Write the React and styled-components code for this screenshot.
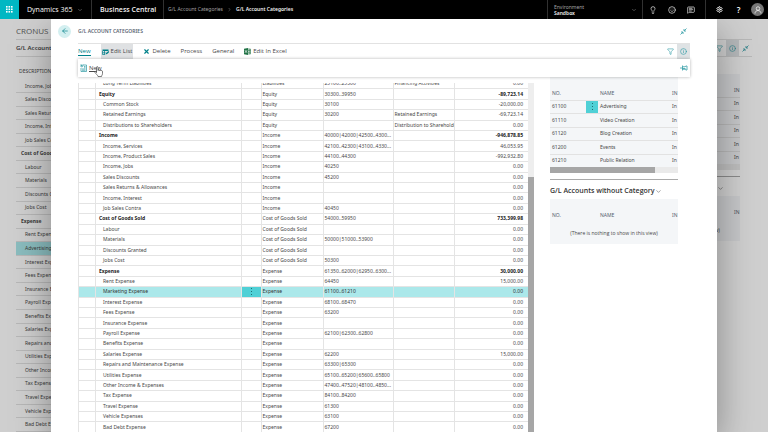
import styled, { createGlobalStyle, css } from 'styled-components'
import { ArrowLeft, ChevronDown, ChevronRight, Filter, Info, Lightbulb, MessageSquareText, Minimize2, Settings, Smile, X } from 'lucide-react'

const GlobalStyle = createGlobalStyle`
  * {
    box-sizing: border-box;
  }
  body {
    margin: 0;
    font-family: 'Noto Sans', 'Open Sans', sans-serif;
    font-size: 5px;
    line-height: 7px;
    color: #484848;
    background: #fff;
  }
  button {
    font: inherit;
    color: inherit;
    background: none;
    border: none;
    padding: 0;
    display: flex;
    align-items: center;
    cursor: pointer;
  }
  a {
    color: inherit;
    text-decoration: none;
  }
  h1, h2 {
    margin: 0;
  }
  svg {
    display: block;
    flex: none;
  }
`
const Container = styled.div`
  height: 100vh;
  display: flex;
  flex-direction: column;
  overflow: hidden;
`
const TopBar = styled.header`
  height: 19px;
  flex: none;
  display: flex;
  align-items: stretch;
  background: #000;
  color: #fff;
`
const Waffle = styled.button`
  width: 19px;
  justify-content: center;
  background: #00b7c3;
`
const Product = styled.button`
  width: 73px;
  padding: 0 8px;
  justify-content: space-between;
  font-family: 'Open Sans', sans-serif;
  font-size: 7px;
  border-right: 1px solid #333;
`
const AppName = styled.a`
  width: 72px;
  display: flex;
  align-items: center;
  padding-left: 8px;
  font-family: 'Open Sans', sans-serif;
  font-size: 7px;
  font-weight: 600;
  border-right: 1px solid #333;
`
const Crumbs = styled.nav`
  flex: 1;
  display: flex;
  align-items: center;
  gap: 4px;
  padding-left: 4px;
  color: #aaa;
`
const Crumb = styled.a`
  font-weight: ${props => (props.$current ? 600 : 400)};
  color: ${props => (props.$current ? '#fff' : '#aaa')};
`
const Environment = styled.button`
  width: 96px;
  justify-content: space-between;
  padding: 0 5px 0 6px;
  text-align: left;
  line-height: 6px;
  border-left: 1px solid #333;
  border-right: 1px solid #333;
`
const EnvLabel = styled.span`
  display: block;
  color: #aaa;
`
const EnvName = styled.span`
  display: block;
  font-weight: 600;
`
const TopIcons = styled.div`
  display: flex;
  align-items: center;
  padding: 0 ${props => props.$end}px 0 ${props => props.$start}px;
  border-right: ${props => (props.$divider ? '1px solid #333' : 'none')};
`
const TopIcon = styled.button`
  width: 19px;
  height: 19px;
  justify-content: center;
  font-size: 8px;
  font-weight: 600;
`
const Avatar = styled.span`
  width: 13px;
  height: 13px;
  display: flex;
  align-items: center;
  justify-content: center;
  border-radius: 50%;
  background: #777;
`
const Stage = styled.main`
  flex: 1;
  min-height: 0;
  position: relative;
`
const ParentPage = styled.div`
  height: 100%;
  display: flex;
  flex-direction: column;
  padding-left: 16px;
`
const Company = styled.div`
  height: 20px;
  padding-top: 8px;
  font-family: 'Open Sans', sans-serif;
  font-size: 8px;
  line-height: 8px;
  color: #666;
`
const ParentBar = styled.div`
  height: 18px;
  display: flex;
  align-items: center;
  justify-content: space-between;
  margin-right: 16px;
  font-size: 6px;
  font-weight: 600;
  border-top: 1px solid #e2e2e2;
  border-bottom: 1px solid #e2e2e2;
`
const ParentBody = styled.div`
  flex: 1;
  min-height: 0;
  display: flex;
  justify-content: space-between;
  padding: 5px 28px 0 0;
`
const ParentFacts = styled.div`
  padding-top: 12px;
`
const ParentTable = styled.table`
  width: 240px;
  height: 100%;
  border-collapse: collapse;
  th {
    height: 18px;
    padding: 0 3px;
    text-align: left;
    font-weight: 400;
  }
  td {
    padding: 0 9px;
    border-bottom: 1px solid #e2e2e2;
  }
`
const ParentRow = styled.tr`
  background: ${props => (props.$selected ? '#abe8ea' : 'none')};
  && td {
    padding-left: ${props => (props.$heading ? 5 : 9)}px;
    font-weight: ${props => (props.$heading ? 700 : 400)};
  }
`
const Scrim = styled.div`
  position: absolute;
  inset: 0;
  background: rgba(0, 0, 0, 0.19);
`
const Dialog = styled.section`
  position: absolute;
  inset: 0 51px;
  display: flex;
  flex-direction: column;
  padding-left: 27px;
  background: #fff;
  box-shadow: 0 12px 36px rgba(0, 0, 0, 0.36);
`
const DialogHeader = styled.div`
  height: 24px;
  flex: none;
  display: flex;
  align-items: center;
  gap: 7px;
  margin-left: -20px;
  padding-right: 30px;
  color: #008089;
`
const BackButton = styled.button`
  width: 13px;
  height: 13px;
  justify-content: center;
  border-radius: 50%;
  background: #d3eff0;
`
const PageTitle = styled.h1`
  flex: 1;
  font-size: 5px;
  font-weight: 600;
  color: #5a6573;
`
const Ribbon = styled.div`
  height: 16px;
  flex: none;
  display: flex;
  align-items: stretch;
  margin-right: 27px;
  font-family: 'Open Sans', sans-serif;
  font-size: 6px;
  border-top: 1px solid #e2e2e2;
`
const RibbonActions = styled.div`
  flex: 1;
  display: flex;
  gap: 10px;
`
const RibbonButton = styled.button`
  gap: 2px;
  ${props => props.$pressed && css`
    padding: 0 1px;
    background: #dfe1e3;
  `}
`
const Tab = styled.span`
  color: ${props => (props.$active ? '#008089' : 'inherit')};
  border-bottom: 1px solid ${props => (props.$active ? '#008089' : 'transparent')};
`
const IconButton = styled.button`
  width: 13px;
  height: 100%;
  justify-content: center;
  color: #2b9aa3;
  background: ${props => (props.$pressed ? '#dfe3e5' : 'none')};
`
const IconGroup = styled.div`
  height: 100%;
  display: flex;
`
const SubMenu = styled.div`
  height: 18px;
  flex: none;
  position: relative;
  z-index: 1;
  display: flex;
  align-items: center;
  justify-content: space-between;
  margin-right: 27px;
  padding: 0 2px;
  font-family: 'Open Sans', sans-serif;
  font-size: 6px;
  background: #fff;
  box-shadow: 0 0 3px rgba(0, 0, 0, 0.3);
`
const SubMenuItem = styled.button`
  gap: 2px;
  text-decoration: underline;
`
const Pointer = styled.svg`
  position: absolute;
  left: 16px;
  top: 7px;
`
const DialogBody = styled.div`
  flex: 1;
  min-height: 0;
  display: flex;
  padding-right: 39px;
`
const ListPane = styled.div`
  flex: 1;
  min-width: 0;
  display: flex;
  margin: 6px 16px 0 0;
  overflow: hidden;
`
const ListView = styled.div`
  flex: 1;
  min-width: 0;
`
const ListTable = styled.table`
  width: 100%;
  height: calc(100% + 6px);
  margin-top: -5px;
  table-layout: fixed;
  border-collapse: collapse;
`
const Cell = styled.td`
  padding: 0 0 0 1px;
  border: 1px solid #e4e4e4;
  border-right: none;
  overflow: hidden;
  white-space: nowrap;
`
const NameCell = styled(Cell)`
  padding-left: ${props => (props.$heading ? 3 : 7)}px;
  font-weight: ${props => (props.$heading ? 700 : 400)};
  color: ${props => (props.$heading ? '#222' : 'inherit')};
`
const AmountCell = styled(NameCell)`
  padding: 0 5px 0 0;
  text-align: right;
`
const MenuCell = styled(Cell)`
  background: ${props => (props.$selected ? '#4fd0d6' : 'none')};
`
const Row = styled.tr`
  background: ${props => (props.$selected ? '#abe8ea' : 'none')};
  color: ${props => (props.$selected ? '#333' : 'inherit')};
`
const RowMenu = styled.button`
  margin: 0 auto;
`
const Scrollbar = styled.div`
  width: 6px;
  flex: none;
  padding-top: 94px;
  background: #eee;
`
const Thumb = styled.div`
  width: ${props => props.$width || '100%'};
  height: 100%;
  background: #a6a6a6;
`
const HScrollbar = styled.div`
  height: 6px;
  background: #eaeaea;
`
const FactBox = styled.aside`
  width: 128px;
  flex: none;
`
const FactTable = styled.table`
  width: 100%;
  table-layout: fixed;
  border-collapse: collapse;
  background: #f4f6f8;
  th {
    height: 23px;
    padding: 10px 0 0 2px;
    text-align: left;
    font-weight: 400;
    color: #54606e;
    overflow: hidden;
  }
  td {
    height: 13px;
    padding: 0 0 0 2px;
    overflow: hidden;
    white-space: nowrap;
  }
  tbody tr {
    border-top: 1px solid #e2e2e2;
  }
  tbody tr:nth-child(even) td {
    height: 14px;
  }
`
const FactMenuCell = styled.td`
  background: ${props => (props.$selected ? '#4fd0d6' : 'none')};
`
const FactTitle = styled.h2`
  display: flex;
  align-items: center;
  margin-top: 6px;
  padding: 6px 0 3px;
  font-family: 'Open Sans', sans-serif;
  font-size: 7px;
  line-height: 10px;
  font-weight: 600;
  color: #333;
  border-top: 1px solid #aaa;
`
const Empty = styled.div`
  padding: 8px 0 7px;
  font-family: 'Open Sans', sans-serif;
  text-align: center;
  background: #f4f6f8;
`

const rows = [
  ['Long Term Liabilities', 'Liabilities', '25100..25300', 'Financing Activities', '0.00'],
  ['Equity', 'Equity', '30300..39950', '', '-89,723.14', true],
  ['Common Stock', 'Equity', '30100', '', '-20,000.00'],
  ['Retained Earnings', 'Equity', '30200', 'Retained Earnings', '-69,723.14'],
  ['Distributions to Shareholders', 'Equity', '', 'Distribution to Shareholders', '0.00'],
  ['Income', 'Income', '40000|42000|42500..4300...', '', '-946,878.85', true],
  ['Income, Services', 'Income', '42100..42300|43100..4330...', '', '46,053.95'],
  ['Income, Product Sales', 'Income', '44100..44300', '', '-992,932.80'],
  ['Income, Jobs', 'Income', '40250', '', '0.00'],
  ['Sales Discounts', 'Income', '45200', '', '0.00'],
  ['Sales Returns & Allowances', 'Income', '', '', '0.00'],
  ['Income, Interest', 'Income', '', '', '0.00'],
  ['Job Sales Contra', 'Income', '40450', '', '0.00'],
  ['Cost of Goods Sold', 'Cost of Goods Sold', '54000..59950', '', '733,399.98', true],
  ['Labour', 'Cost of Goods Sold', '', '', '0.00'],
  ['Materials', 'Cost of Goods Sold', '50000|51000..53900', '', '0.00'],
  ['Discounts Granted', 'Cost of Goods Sold', '', '', '0.00'],
  ['Jobs Cost', 'Cost of Goods Sold', '50300', '', '0.00'],
  ['Expense', 'Expense', '61350..62000|62950..6300...', '', '30,000.00', true],
  ['Rent Expense', 'Expense', '64450', '', '15,000.00'],
  ['Marketing Expense', 'Expense', '61100..61210', '', '0.00'],
  ['Interest Expense', 'Expense', '68100..68470', '', '0.00'],
  ['Fees Expense', 'Expense', '63200', '', '0.00'],
  ['Insurance Expense', 'Expense', '', '', '0.00'],
  ['Payroll Expense', 'Expense', '62100|62300..62800', '', '0.00'],
  ['Benefits Expense', 'Expense', '', '', '0.00'],
  ['Salaries Expense', 'Expense', '62200', '', '15,000.00'],
  ['Repairs and Maintenance Expense', 'Expense', '63300|65300', '', '0.00'],
  ['Utilities Expense', 'Expense', '65100..65200|65600..65800', '', '0.00'],
  ['Other Income & Expenses', 'Expense', '47400..47520|48100..4850...', '', '0.00'],
  ['Tax Expense', 'Expense', '84100..84200', '', '0.00'],
  ['Travel Expense', 'Expense', '61300', '', '0.00'],
  ['Vehicle Expenses', 'Expense', '63100', '', '0.00'],
  ['Bad Debt Expense', 'Expense', '67200', '', '0.00'],
]

const parentRows = [
  'Income, Jobs', 'Sales Discounts', 'Sales Returns & Allowances', 'Income, Interest', 'Job Sales Contra',
  'Cost of Goods Sold', 'Labour', 'Materials', 'Discounts Granted', 'Jobs Cost', 'Expense', 'Rent Expense',
  'Advertising Expense', 'Interest Expense', 'Fees Expense', 'Insurance Expense', 'Payroll Expense',
  'Benefits Expense', 'Salaries Expense', 'Repairs and Maintenance Expense', 'Utilities Expense',
  'Other Income & Expenses', 'Tax Expense', 'Travel Expense', 'Vehicle Expenses', 'Bad Debt Expense',
]
const parentHeadings = ['Cost of Goods Sold', 'Expense']

const accounts = [
  ['61100', 'Advertising'],
  ['61110', 'Video Creation'],
  ['61120', 'Blog Creation'],
  ['61200', 'Events'],
  ['61210', 'Public Relation'],
]

const Dots = () => (
  <svg width="2" height="7" viewBox="0 0 2 7" fill="#1f6f75">
    <rect x="0" y="0" width="1" height="1" />
    <rect x="0" y="3" width="1" height="1" />
    <rect x="0" y="6" width="1" height="1" />
  </svg>
)

const WaffleIcon = () => (
  <svg width="7" height="7" viewBox="0 0 7 7" fill="#fff">
    {[0, 2.5, 5].map(y => [0, 2.5, 5].map(x => (
      <rect key={`${x}-${y}`} x={x} y={y} width="1.6" height="1.6" />
    )))}
  </svg>
)

const EditListIcon = () => (
  <svg width="7" height="6" viewBox="0 0 14 12">
    <path d="M1 1h12v3H1z" fill="#008089" />
    <path d="M1 4v7h5M1 7.5h6M5 4v7M13 4v2" fill="none" stroke="#008089" strokeWidth="1.4" />
    <path d="M7 11l1-3 4-3 2 2-4 3z" fill="#008089" />
  </svg>
)

const NewIcon = () => (
  <svg width="7" height="8" viewBox="0 0 14 16" fill="none" stroke="#2b9aa3" strokeWidth="1.4">
    <path d="M6 2h7v13H2V8" />
    <path d="M4 10h7M4 12.5h7M8 5h3M8 7.5h3" />
    <path d="M3.5 0v7M0 3.5h7M1 1l5 5M6 1L1 6" strokeWidth="1" />
  </svg>
)

const ExcelIcon = () => (
  <svg width="7" height="7" viewBox="0 0 14 14">
    <path d="M8 2h5v10H8M8 5h5M8 8.5h5M10.5 2v10" fill="none" stroke="#217346" strokeWidth="1.2" />
    <path d="M0 1.5L8 0v14l-8-1.500z" fill="#217346" />
    <path d="M2 4.5l4 5M6 4.5l-4 5" stroke="#fff" strokeWidth="1.4" />
  </svg>
)

// two arrows meeting in the middle
const CollapseIcon = () => (
  <svg width="7" height="7" viewBox="0 0 14 14" fill="none" stroke="#2b9aa3" strokeWidth="1.6">
    <path d="M13 1L8.5 5.5M8 2v4h4M1 13l4.500-4.500M6 12V8H2" />
  </svg>
)

const PinIcon = () => (
  <svg width="8" height="6" viewBox="0 0 16 12" fill="none" stroke="#2b9aa3" strokeWidth="1.5">
    <path d="M0 6h5M5 1v10M5 3.5h5l2-1.500h2v8h-2l-2-1.500H5M5 7h6" />
  </svg>
)

const UserIcon = () => (
  <svg width="8" height="8" viewBox="0 0 16 16" fill="none" stroke="#fff" strokeWidth="1.4">
    <circle cx="8" cy="5" r="3.5" />
    <path d="M2 15c0-4 3-6 6-6s6 2 6 6" />
  </svg>
)

const HandPointer = () => (
  <Pointer width="9" height="11" viewBox="0 0 18 22">
    <path
      d="M5 13V3c0-2.500 3-2.500 3 0v6c0-1.500 3-1.500 3 .5 0-1.500 3-1.500 3 .5 0-1.500 3-1 3 1v4c0 3-2 4-2 6H8c0-2-4-5-6-8-1-2 1.500-3 3-1z"
      fill="#fff"
      stroke="#333"
      strokeWidth="1.3"
    />
  </Pointer>
)

const FactCols = () => (
  <colgroup>
    <col style={{ width: 36 }} />
    <col style={{ width: 12 }} />
    <col />
    <col style={{ width: 8 }} />
  </colgroup>
)

const FactHead = () => (
  <thead>
    <tr>
      <th>NO.</th>
      <th aria-label="Row menu" />
      <th>NAME</th>
      <th>IN</th>
    </tr>
  </thead>
)

const Facts = ({ selected }) => (
  <FactBox>
    <FactTable>
      <FactCols />
      <FactHead />
      <tbody>
        {accounts.map(([no, name]) => (
          <tr key={no}>
            <td>{no}</td>
            <FactMenuCell $selected={no === selected}>
              {no === selected && <RowMenu aria-label="Show more options"><Dots /></RowMenu>}
            </FactMenuCell>
            <td>{name}</td>
            <td>In</td>
          </tr>
        ))}
      </tbody>
    </FactTable>
    <HScrollbar>
      <Thumb $width="82%" />
    </HScrollbar>
    <FactTitle>
      G/L Accounts without Category
      <ChevronDown size={7} strokeWidth={1.5} />
    </FactTitle>
    <FactTable>
      <FactCols />
      <FactHead />
    </FactTable>
    <Empty>(There is nothing to show in this view)</Empty>
  </FactBox>
)

const Parent = () => (
  <ParentPage aria-hidden="true">
    <Company>CRONUS</Company>
    <ParentBar>
      G/L Accounts
      <IconGroup>
        <IconButton tabIndex={-1}><Filter size={7} /></IconButton>
        <IconButton tabIndex={-1} $pressed><Info size={7} /></IconButton>
        <IconButton tabIndex={-1}><CollapseIcon /></IconButton>
      </IconGroup>
    </ParentBar>
    <ParentBody>
      <ParentTable>
        <thead>
          <tr><th>DESCRIPTION</th></tr>
        </thead>
        <tbody>
          {parentRows.map(name => (
            <ParentRow key={name} $heading={parentHeadings.includes(name)} $selected={name === 'Advertising Expense'}>
              <td>{name}</td>
            </ParentRow>
          ))}
        </tbody>
      </ParentTable>
      <ParentFacts>
        <Facts />
      </ParentFacts>
    </ParentBody>
  </ParentPage>
)

const Categories = () => (
  <ListTable>
    <colgroup>
      <col style={{ width: 17 }} />
      <col />
      <col style={{ width: 20 }} />
      <col style={{ width: 62 }} />
      <col style={{ width: 70 }} />
      <col style={{ width: 61 }} />
      <col style={{ width: 74 }} />
    </colgroup>
    <tbody>
      {rows.map(([name, type, totaling, detail, amount, heading]) => {
        const selected = name === 'Marketing Expense'
        return (
          <Row key={name} $selected={selected}>
            <Cell />
            <NameCell $heading={heading}>{name}</NameCell>
            <MenuCell $selected={selected}>
              {selected && <RowMenu aria-label="Show more options"><Dots /></RowMenu>}
            </MenuCell>
            <Cell>{type}</Cell>
            <Cell>{totaling}</Cell>
            <Cell>{detail}</Cell>
            <AmountCell $heading={heading}>{amount}</AmountCell>
          </Row>
        )
      })}
    </tbody>
  </ListTable>
)

const App = () => {
  return (
    <Container>
      <GlobalStyle />
      <TopBar>
        <Waffle aria-label="App launcher"><WaffleIcon /></Waffle>
        <Product>Dynamics 365 <ChevronDown size={6} color="#999" /></Product>
        <AppName href="#home">Business Central</AppName>
        <Crumbs>
          <Crumb href="#categories">G/L Account Categories</Crumb>
          <ChevronRight size={5} />
          <Crumb href="#current" $current>G/L Account Categories</Crumb>
        </Crumbs>
        <Environment>
          <span>
            <EnvLabel>Environment</EnvLabel>
            <EnvName>Sandbox</EnvName>
          </span>
          <ChevronDown size={6} color="#999" />
        </Environment>
        <TopIcons $start={0} $end={5} $divider>
          <TopIcon aria-label="Tips"><Lightbulb size={8} /></TopIcon>
          <TopIcon aria-label="Feedback"><Smile size={8} /></TopIcon>
          <TopIcon aria-label="Messages"><MessageSquareText size={8} /></TopIcon>
        </TopIcons>
        <TopIcons $start={4} $end={1}>
          <TopIcon aria-label="Settings"><Settings size={7} strokeWidth={3} /></TopIcon>
          <TopIcon aria-label="Help">?</TopIcon>
          <TopIcon aria-label="Account"><Avatar><UserIcon /></Avatar></TopIcon>
        </TopIcons>
      </TopBar>
      <Stage>
        <Parent />
        <Scrim />
        <Dialog>
          <DialogHeader>
            <BackButton aria-label="Back"><ArrowLeft size={8} /></BackButton>
            <PageTitle>G/L ACCOUNT CATEGORIES</PageTitle>
            <button aria-label="Collapse"><CollapseIcon /></button>
          </DialogHeader>
          <Ribbon>
            <RibbonActions>
              <RibbonButton><Tab $active>New</Tab></RibbonButton>
              <RibbonButton $pressed><EditListIcon />Edit List</RibbonButton>
              <RibbonButton><X size={7} strokeWidth={4} color="#008089" />Delete</RibbonButton>
              <RibbonButton><Tab>Process</Tab></RibbonButton>
              <RibbonButton><Tab>General</Tab></RibbonButton>
              <RibbonButton><ExcelIcon />Edit In Excel</RibbonButton>
            </RibbonActions>
            <IconGroup>
              <IconButton aria-label="Filter"><Filter size={7} /></IconButton>
              <IconButton aria-label="Details" $pressed><Info size={7} /></IconButton>
            </IconGroup>
          </Ribbon>
          <SubMenu>
            <SubMenuItem><NewIcon />New</SubMenuItem>
            <button aria-label="Pin"><PinIcon /></button>
            <HandPointer />
          </SubMenu>
          <DialogBody>
            <ListPane>
              <ListView>
                <Categories />
              </ListView>
              <Scrollbar><Thumb /></Scrollbar>
            </ListPane>
            <Facts selected="61100" />
          </DialogBody>
        </Dialog>
      </Stage>
    </Container>
  )
}

export default App
